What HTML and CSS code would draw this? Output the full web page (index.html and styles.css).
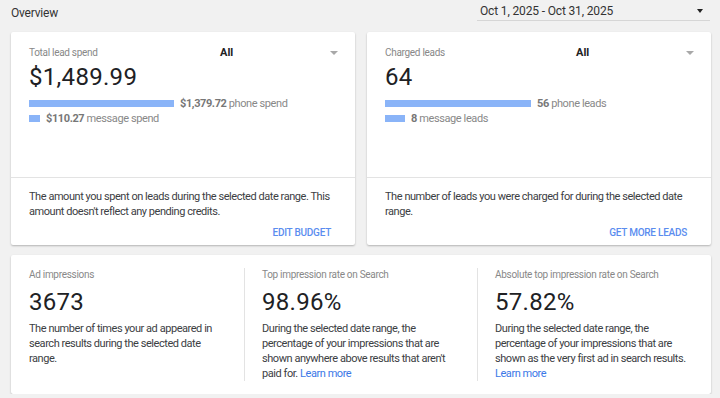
FILE: index.html
```html
<!DOCTYPE html>
<html lang="en">
  <head>
    <meta charset="UTF-8" />
    <title>Overview</title>
    <link rel="stylesheet" href="styles.css">
  </head>
  <body>
    <div class="header">
      <div class="title">Overview</div>
      <div class="date-select">
        <span>Oct 1, 2025 - Oct 31, 2025</span>
        <span class="caret dark"></span>
      </div>
    </div>

    <div class="top-cards">
      <div class="card">
        <div class="card-main">
          <div class="label-row">
            <div class="label">Total lead spend</div>
            <div class="filter">All</div>
            <span class="caret"></span>
          </div>
          <div class="big">$1,489.99</div>
          <div class="bar-row">
            <div class="bar" style="width: 145px"></div>
            <span><b>$1,379.72</b> phone spend</span>
          </div>
          <div class="bar-row">
            <div class="bar" style="width: 11px"></div>
            <span><b>$110.27</b> message spend</span>
          </div>
        </div>
        <div class="card-foot">
          <p>The amount you spent on leads during the selected date range. This amount doesn't reflect any pending credits.</p>
          <div class="actions"><a href="#">EDIT BUDGET</a></div>
        </div>
      </div>

      <div class="card">
        <div class="card-main">
          <div class="label-row">
            <div class="label">Charged leads</div>
            <div class="filter">All</div>
            <span class="caret"></span>
          </div>
          <div class="big">64</div>
          <div class="bar-row">
            <div class="bar" style="width: 146px"></div>
            <span><b>56</b> phone leads</span>
          </div>
          <div class="bar-row">
            <div class="bar" style="width: 20px"></div>
            <span><b>8</b> message leads</span>
          </div>
        </div>
        <div class="card-foot">
          <p>The number of leads you were charged for during the selected date range.</p>
          <div class="actions"><a href="#">GET MORE LEADS</a></div>
        </div>
      </div>
    </div>

    <div class="card stats">
      <div class="stat">
        <div class="label">Ad impressions</div>
        <div class="big">3673</div>
        <p>The number of times your ad appeared in search results during the selected date range.</p>
      </div>
      <div class="stat">
        <div class="label">Top impression rate on Search</div>
        <div class="big">98.96%</div>
        <p>During the selected date range, the percentage of your impressions that are shown anywhere above results that aren't paid for. <a href="#">Learn more</a></p>
      </div>
      <div class="stat">
        <div class="label">Absolute top impression rate on Search</div>
        <div class="big">57.82%</div>
        <p>During the selected date range, the percentage of your impressions that are shown as the very first ad in search results. <a href="#">Learn more</a></p>
      </div>
    </div>
  </body>
</html>
```

FILE: styles.css
```css
body {
  font-family: Roboto, "Liberation Sans", sans-serif;
  background-color: #f1f1f1;
  margin: 0;
  padding: 0 9px 0 11px;
  color: #3c4043;
}
.header {
  display: flex;
  justify-content: space-between;
  align-items: flex-start;
  height: 32px;
}
.title {
  font-size: 12px;
  letter-spacing: -0.2px;
  line-height: 16px;
  padding-top: 5px;
  color: #333;
}
.date-select {
  display: flex;
  align-items: center;
  justify-content: space-between;
  width: 233px;
  margin-right: 1px;
  padding: 3px 7px 1px 3px;
  box-sizing: border-box;
  border-bottom: 1px solid #d6d6d6;
  font-size: 12px;
  letter-spacing: -0.15px;
  line-height: 16px;
  color: #333;
}
.caret {
  width: 0;
  height: 0;
  border-left: 4px solid transparent;
  border-right: 4px solid transparent;
  border-top: 4px solid #a8a8a8;
}
.caret.dark {
  border-left-width: 3.5px;
  border-right-width: 3.5px;
  border-top: 4px solid #222;
}
.top-cards {
  display: flex;
  gap: 12px;
  margin-bottom: 10px;
}
.card {
  background: white;
  border-radius: 2px;
  box-shadow: 0 1px 2px rgba(0, 0, 0, 0.25);
}
.top-cards .card {
  flex: 1;
  height: 213px;
  display: flex;
  flex-direction: column;
}
.card-main {
  flex: 1;
  padding: 14px 17px 0 18px;
}
.label-row {
  display: flex;
  align-items: center;
}
.label {
  font-size: 10px;
  letter-spacing: -0.3px;
  line-height: 14px;
  color: #888;
}
.label-row .label {
  width: 191px;
}
.filter {
  flex: 1;
  font-size: 11px;
  font-weight: bold;
  color: #222;
  line-height: 14px;
}
.big {
  font-size: 24px;
  letter-spacing: 0.3px;
  line-height: 30px;
  color: #202124;
  margin-top: 2px;
}
.bar-row {
  display: flex;
  align-items: center;
  gap: 6px;
  font-size: 11px;
  letter-spacing: -0.4px;
  line-height: 15px;
  color: #888;
}
.big + .bar-row {
  margin-top: 4px;
}
.bar-row b {
  color: #777;
}
.bar {
  height: 7px;
  background-color: #8ab4f8;
}
.card-foot {
  border-top: 1px solid #e3e3e3;
  padding: 11px 18px 0;
}
p {
  margin: 0;
  font-size: 11px;
  letter-spacing: -0.45px;
  line-height: 15px;
}
.actions {
  text-align: right;
  margin-right: -2px;
}
.actions a {
  display: inline-block;
  padding: 7px 8px 6px;
  font-size: 10px;
  letter-spacing: -0.25px;
  line-height: 13px;
  font-weight: 500;
  color: #5b8def;
  text-decoration: none;
}
.stats {
  display: grid;
  grid-template-columns: 215px 233px 1fr;
  padding: 13px 18px 13px;
}
.stat {
  padding: 0 17px;
  border-left: 1px solid #e3e3e3;
}
.stat:first-child {
  padding-left: 0;
  border-left: none;
}
.stat:last-child {
  padding-right: 0;
}
.stat .big {
  margin-top: 5px;
  margin-bottom: 4px;
}
.stat a {
  color: #3b78e7;
  text-decoration: none;
}
```
